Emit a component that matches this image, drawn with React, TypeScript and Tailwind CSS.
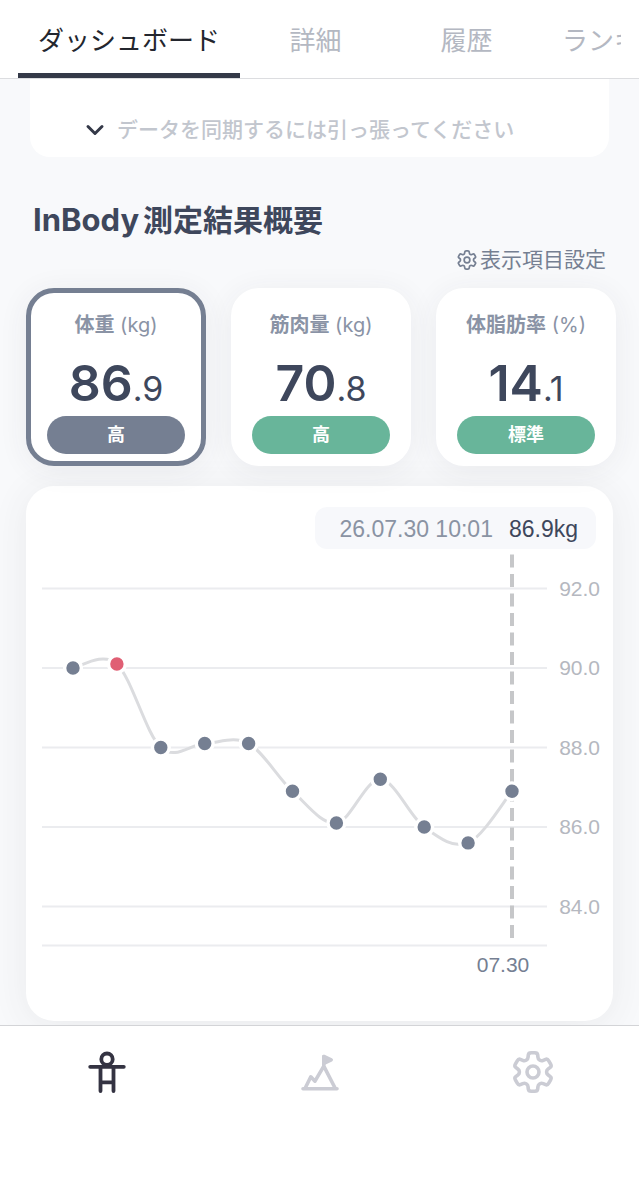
import { useState } from 'react';

const FONT = "font-['Inter','Noto_Sans_CJK_JP',sans-serif]";

const tabs = ['ダッシュボード', '詳細', '履歴', 'ランキング'];

const metrics = [
  { name: '体重', unit: 'kg', whole: '86', decimal: '9', status: '高' },
  { name: '筋肉量', unit: 'kg', whole: '70', decimal: '8', status: '高' },
  { name: '体脂肪率', unit: '%', whole: '14', decimal: '1', status: '標準' }
];

const weights = [90.0, 90.1, 88.0, 88.1, 88.1, 86.9, 86.1, 87.2, 86.0, 85.6, 86.9];
const HIGHLIGHT = 1;
const ticks = [92, 90, 88, 86, 84];

const toX = (i: number) => 47 + i * 43.9;
const toY = (v: number) => 119 + (90 - v) * 39.75;

// Catmull-Rom spline through the measured points
function linePath(values: number[]) {
  const p = values.map((v, i) => [toX(i), toY(v)]);
  let d = `M${p[0][0]} ${p[0][1]}`;
  for (let i = 0; i < p.length - 1; i++) {
    const before = p[i - 1] ?? p[i];
    const a = p[i];
    const b = p[i + 1];
    const after = p[i + 2] ?? b;
    d += ` C${a[0] + (b[0] - before[0]) / 6} ${a[1] + (b[1] - before[1]) / 6}`;
    d += ` ${b[0] - (after[0] - a[0]) / 6} ${b[1] - (after[1] - a[1]) / 6} ${b[0]} ${b[1]}`;
  }
  return d;
}

// Six teeth, every corner softened with a quadratic curve
function gearPath() {
  const tooth = [[12.8, -5.2], [19.2, -4.4], [19.2, 4.4], [12.8, 5.2]];
  const pts: number[][] = [];
  for (let k = 0; k < 6; k++) {
    const t = (k * Math.PI) / 3 - Math.PI / 2;
    tooth.forEach(([u, v]) => {
      pts.push([u * Math.cos(t) - v * Math.sin(t), u * Math.sin(t) + v * Math.cos(t)]);
    });
  }
  const mix = (a: number[], b: number[], r: number) =>
    `${(a[0] + (b[0] - a[0]) * r).toFixed(2)} ${(a[1] + (b[1] - a[1]) * r).toFixed(2)}`;
  return (
    pts
      .map((p, i) => {
        const prev = pts[(i + pts.length - 1) % pts.length];
        const next = pts[(i + 1) % pts.length];
        return `${i === 0 ? 'M' : 'L'}${mix(p, prev, 0.3)} Q${p[0].toFixed(2)} ${p[1].toFixed(2)} ${mix(p, next, 0.3)}`;
      })
      .join(' ') + 'Z'
  );
}

function GearIcon({ className }: { className: string }) {
  return (
    <svg viewBox="-21 -21 42 42" fill="none" stroke="currentColor" strokeWidth={3.6} strokeLinejoin="round" className={className} aria-hidden="true">
      <path d={gearPath()} />
      <circle r={6} />
    </svg>
  );
}

function BodyIcon() {
  return (
    <svg viewBox="0 0 40 44" fill="none" stroke="currentColor" strokeWidth={3.8} strokeLinecap="round" className="w-10 h-11" aria-hidden="true">
      <circle cx={20} cy={8.2} r={5.7} />
      <path d="M3.2 15.8H36.8M13.5 15.8V40M26.5 15.8V40M13.5 31.3H26.5" />
    </svg>
  );
}

function GoalIcon() {
  return (
    <svg viewBox="0 0 40 44" fill="none" stroke="currentColor" strokeWidth={3.6} strokeLinecap="round" strokeLinejoin="round" className="w-10 h-11" aria-hidden="true">
      <path d="M3 37.7H37M5.5 36.5L10.8 25.8L15 30.2L23.8 15.2L34.8 36.5M23.8 15V5.5" />
      <path d="M23.8 5.5L31.2 8.8L23.8 12.3Z" fill="currentColor" />
    </svg>
  );
}

function WeightChart() {
  const last = weights.length - 1;
  return (
    <svg viewBox="0 0 587 472" className="block w-full font-['Liberation_Sans',sans-serif]" role="img">
      {ticks.map((t) => (
        <g key={t}>
          <line x1={16} x2={521} y1={toY(t)} y2={toY(t)} stroke="#ebecef" strokeWidth={2} />
          <text x={574} y={toY(t) + 7} textAnchor="end" fontSize={21} fill="#b5b8c0">
            {t.toFixed(1)}
          </text>
        </g>
      ))}
      <line x1={16} x2={521} y1={396.5} y2={396.5} stroke="#ebecef" strokeWidth={2} />
      <line x1={toX(last)} x2={toX(last)} y1={5.5} y2={389} stroke="#c6c7c9" strokeWidth={4} strokeDasharray="13 6.5" />
      <path d={linePath(weights)} fill="none" stroke="#dbdcdf" strokeWidth={3} />
      {weights.map((v, i) => (
        <circle key={i} cx={toX(i)} cy={toY(v)} r={8.4} fill={i === HIGHLIGHT ? '#e05f74' : '#757f92'} stroke="#ffffff" strokeWidth={3.4} />
      ))}
      <text x={477} y={423} textAnchor="middle" fontSize={21} fill="#757f92">
        07.30
      </text>
    </svg>
  );
}

export default function App() {
  const [tab, setTab] = useState(0);
  const [selected, setSelected] = useState(0);

  return (
    <div className={`min-h-screen flex flex-col bg-[#f8f9fb] text-[#3e475c] ${FONT}`}>
      {/* Top tabs */}
      <header className="bg-white border-b border-[#dcdde0] px-[18px]">
        <nav className="flex overflow-hidden">
          {tabs.map((label, i) => (
            <button
              key={label}
              type="button"
              onClick={() => setTab(i)}
              className={`min-w-[151px] shrink-0 h-[78px] px-5 pt-2 border-b-5 text-[26px] leading-8 whitespace-nowrap cursor-pointer ${
                i === tab ? 'text-[#23262e] border-[#343948]' : 'text-[#b4b8c2] border-transparent'
              }`}
            >
              {label}
            </button>
          ))}
        </nav>
      </header>

      <main className="overflow-hidden pb-1">
        <div className="mx-[30px] h-[78px] flex items-center gap-3 bg-white rounded-b-[20px] pl-[55px] pt-6">
          <svg viewBox="0 0 20 12" className="w-5 h-3 shrink-0" fill="none" stroke="#343948" strokeWidth={3} strokeLinecap="round" strokeLinejoin="round" aria-hidden="true">
            <path d="M3 2.5L10 9.5L17 2.5" />
          </svg>
          <p className="text-[21px] leading-8 font-medium text-[#c2c6ce]">データを同期するには引っ張ってください</p>
        </div>

        <h1 className="mt-[43px] px-[33px] text-[30px] leading-10 font-bold">
          <span className="text-[31px] mr-1">InBody</span>測定結果概要
        </h1>

        <div className="flex justify-end px-[33px] mt-1">
          <button type="button" className="flex items-center gap-[3px] text-[21px] leading-8 text-[#757f92] cursor-pointer">
            <GearIcon className="w-5 h-5" />
            表示項目設定
          </button>
        </div>

        {/* Metric cards */}
        <div className="grid grid-cols-3 gap-[25px] ml-[26px] mr-[23px] mt-3">
          {metrics.map((m, i) => (
            <button
              key={m.name}
              type="button"
              onClick={() => setSelected(i)}
              className={`flex flex-col items-stretch h-[178px] px-4 pt-4 rounded-[28px] bg-white border-5 text-center cursor-pointer shadow-[0_4px_30px_rgba(60,60,70,0.07)] ${
                i === selected ? 'border-[#757f92]' : 'border-white'
              }`}
            >
              <span className="h-8 text-xl leading-8 text-[#8a93a5] whitespace-nowrap">
                <span className="font-bold">{m.name}</span> ({m.unit})
              </span>
              <span className="mt-3 h-[60px] text-[50px] leading-[60px] font-semibold whitespace-nowrap">
                {m.whole}
                <span className="text-[34px] font-normal">.{m.decimal}</span>
              </span>
              <span className={`mt-[3px] h-[38px] rounded-full text-lg leading-[38px] font-bold text-white ${i === selected ? 'bg-[#757f92]' : 'bg-[#68b59a]'}`}>
                {m.status}
              </span>
            </button>
          ))}
        </div>

        {/* Weight history */}
        <section className="mx-[26px] mt-5 pt-[21px] bg-white rounded-[28px] shadow-[0_4px_36px_rgba(60,60,70,0.08)]">
          <div className="flex justify-end px-[17px]">
            <p className="flex gap-4 h-[42px] pl-6 pr-[18px] rounded-xl bg-[#f7f8fb] font-['Liberation_Sans',sans-serif] text-[23px] leading-[44px] whitespace-nowrap">
              <span className="text-[#8a93a3]">26.07.30 10:01</span>
              <span>86.9kg</span>
            </p>
          </div>
          <WeightChart />
        </section>
      </main>

      {/* Bottom navigation */}
      <nav className="grow grid grid-cols-3 justify-items-center items-start bg-white border-t border-[#d3d4d7] pt-[25px]">
        <button type="button" aria-label="ホーム" className="text-[#343342] cursor-pointer">
          <BodyIcon />
        </button>
        <button type="button" aria-label="目標" className="text-[#cbccd4] cursor-pointer">
          <GoalIcon />
        </button>
        <button type="button" aria-label="設定" className="text-[#cbccd4] cursor-pointer">
          <GearIcon className="w-[42px] h-[42px]" />
        </button>
      </nav>
    </div>
  );
}
